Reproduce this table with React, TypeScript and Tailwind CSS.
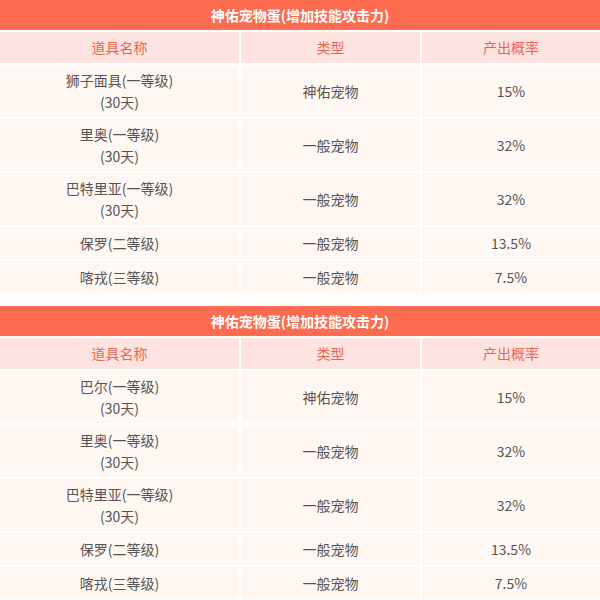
const rows1 = [
  { name: ["狮子面具(一等级)", "(30天)"], type: "神佑宠物", rate: "15%" },
  { name: ["里奥(一等级)", "(30天)"], type: "一般宠物", rate: "32%" },
  { name: ["巴特里亚(一等级)", "(30天)"], type: "一般宠物", rate: "32%" },
  { name: ["保罗(二等级)"], type: "一般宠物", rate: "13.5%" },
  { name: ["喀戎(三等级)"], type: "一般宠物", rate: "7.5%" },
];

const rows2 = [
  { name: ["巴尔(一等级)", "(30天)"], type: "神佑宠物", rate: "15%" },
  { name: ["里奥(一等级)", "(30天)"], type: "一般宠物", rate: "32%" },
  { name: ["巴特里亚(一等级)", "(30天)"], type: "一般宠物", rate: "32%" },
  { name: ["保罗(二等级)"], type: "一般宠物", rate: "13.5%" },
  { name: ["喀戎(三等级)"], type: "一般宠物", rate: "7.5%" },
];

type Row = { name: string[]; type: string; rate: string };

function EggTable({ rows }: { rows: Row[] }) {
  return (
    <div className="flex flex-col gap-[2px] bg-white">
      <div className="flex h-[30px] items-center justify-center bg-[#fd6b50] text-[14px] font-bold text-white">
        神佑宠物蛋(增加技能攻击力)
      </div>
      <div className="grid grid-cols-[239px_179px_1fr] gap-[2px]">
        {["道具名称", "类型", "产出概率"].map((h) => (
          <div key={h} className="flex h-[31px] items-center justify-center bg-[#fde4e1] text-[14px] text-[#e9664f]">
            {h}
          </div>
        ))}
        {rows.map((r, i) => {
          const h = r.name.length > 1 ? "h-[52px]" : "h-[32px]";
          return [
            <div key={`n${i}`} className={`flex ${h} flex-col items-center justify-center bg-[#fff7f2] text-[14px] leading-[22px] text-[#555]`}>
              {r.name.map((line) => (
                <span key={line}>{line}</span>
              ))}
            </div>,
            <div key={`t${i}`} className={`flex ${h} items-center justify-center bg-[#fff7f2] text-[14px] text-[#555]`}>
              {r.type}
            </div>,
            <div key={`r${i}`} className={`flex ${h} items-center justify-center bg-[#fff7f2] text-[14px] text-[#555]`}>
              {r.rate}
            </div>,
          ];
        })}
      </div>
    </div>
  );
}

export default function App() {
  return (
    <div
      className="flex w-[600px] flex-col gap-[13px] bg-white"
      style={{ fontFamily: '"Noto Sans CJK SC", "Noto Sans", sans-serif' }}
    >
      <EggTable rows={rows1} />
      <EggTable rows={rows2} />
    </div>
  );
}
